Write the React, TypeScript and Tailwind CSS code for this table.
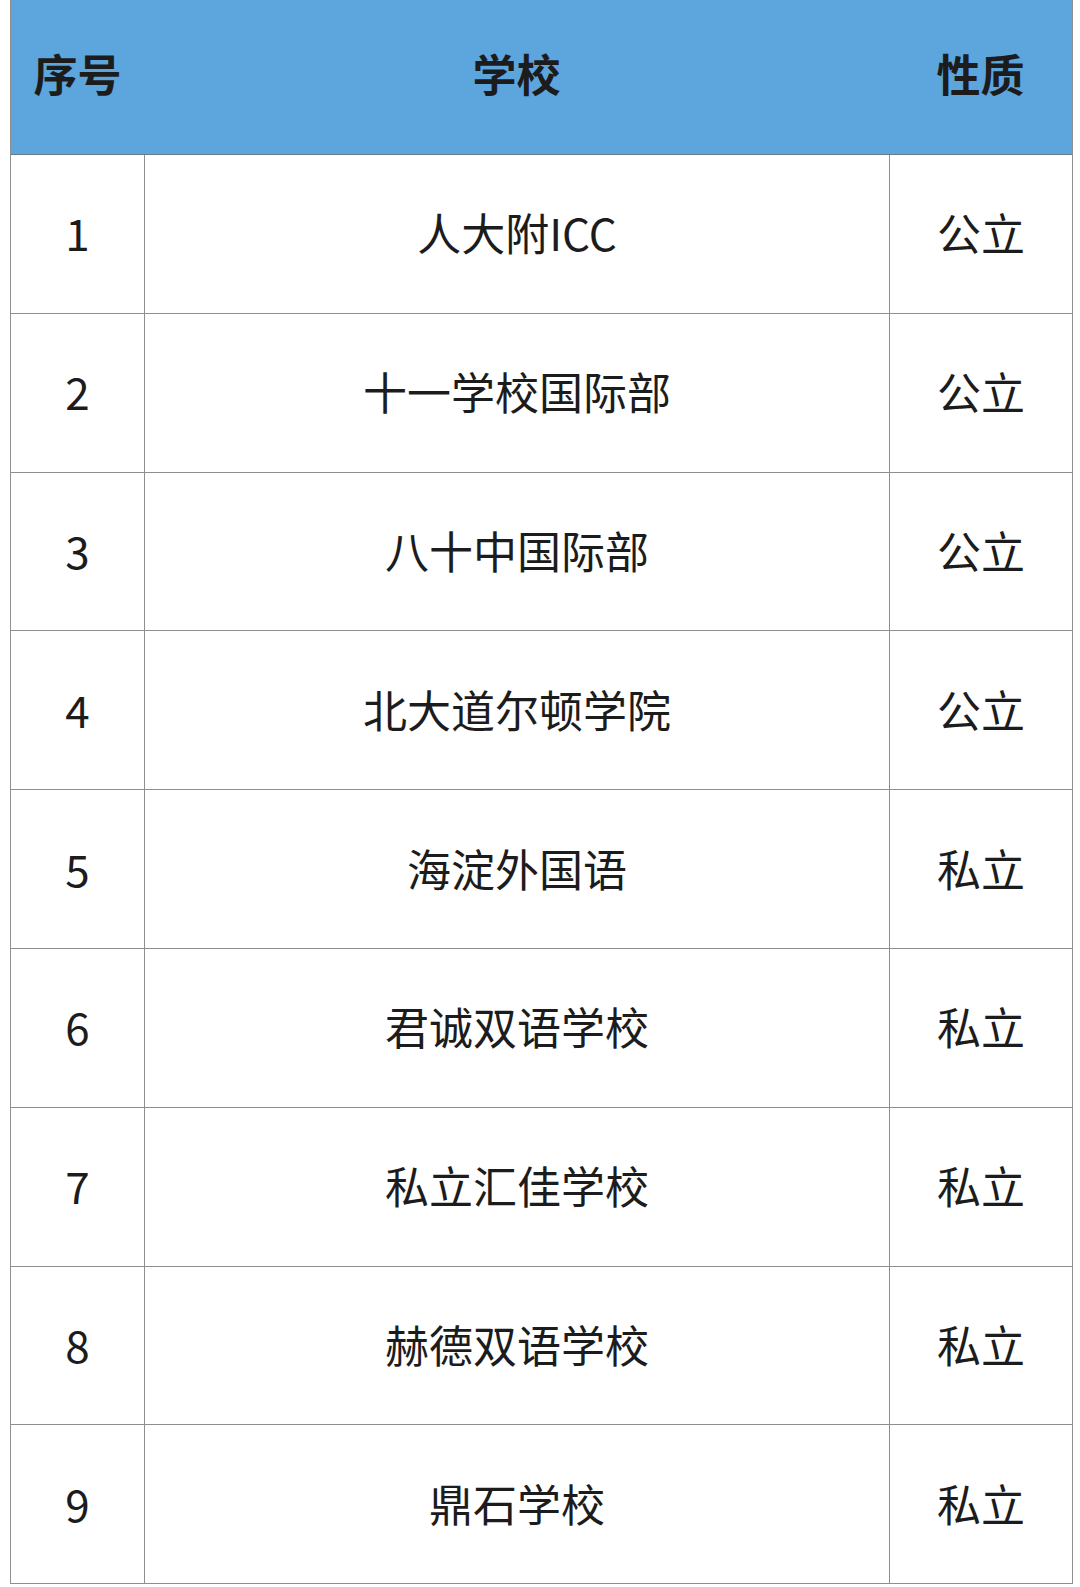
import React from "react";

const rows: [string, string, string][] = [
  ["1", "人大附ICC", "公立"],
  ["2", "十一学校国际部", "公立"],
  ["3", "八十中国际部", "公立"],
  ["4", "北大道尔顿学院", "公立"],
  ["5", "海淀外国语", "私立"],
  ["6", "君诚双语学校", "私立"],
  ["7", "私立汇佳学校", "私立"],
  ["8", "赫德双语学校", "私立"],
  ["9", "鼎石学校", "私立"],
];

export default function App() {
  return (
    <div
      className="w-[1080px] h-[1587px] bg-white"
      style={{ fontFamily: '"Noto Sans CJK SC", "Noto Sans", sans-serif' }}
    >
      <div className="ml-[10px] w-[1063px] border-x border-[#8e8e8e] text-[#1c1c1c]">
        <div className="grid grid-cols-[133px_745px_1fr] h-[155px] bg-[#5ca5dd] border-b border-[#6b7a88] text-[44px] font-bold leading-none pb-[8px]">
          <div className="flex items-center justify-center">序号</div>
          <div className="flex items-center justify-center">学校</div>
          <div className="flex items-center justify-center">性质</div>
        </div>
        {rows.map(([n, s, t]) => (
          <div
            key={n}
            className="grid grid-cols-[133px_745px_1fr] h-[158.8px] border-b border-[#8e8e8e] text-[44px] leading-none"
          >
            <div className="flex items-center justify-center pb-[3px]">{n}</div>
            <div className="flex items-center justify-center border-l border-[#8e8e8e] pb-[3px]">{s}</div>
            <div className="flex items-center justify-center border-l border-[#8e8e8e] pb-[3px]">{t}</div>
          </div>
        ))}
      </div>
    </div>
  );
}
